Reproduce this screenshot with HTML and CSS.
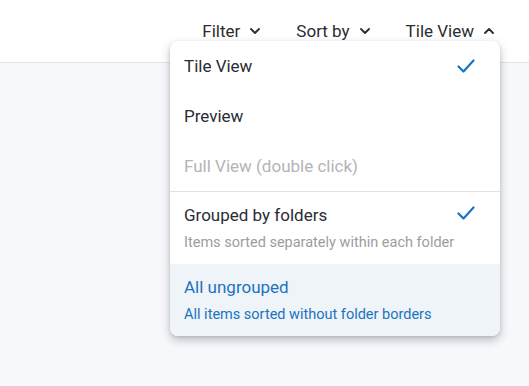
FILE: index.html
```html
<!DOCTYPE html>
<html lang="en">

<head>
  <meta charset="utf-8" />
  <title>View options</title>
  <meta name="viewport" content="width=device-width, initial-scale=1">
  <link rel="stylesheet" href="styles.css">
</head>

<body>
  <!-- ===== TOOLBAR ===== -->
  <header class="toolbar">
    <button class="tool">Filter
      <svg class="chev" viewBox="0 0 10 6"><path d="M1 1l4 4 4-4" /></svg>
    </button>
    <button class="tool">Sort by
      <svg class="chev" viewBox="0 0 10 6"><path d="M1 1l4 4 4-4" /></svg>
    </button>
    <button class="tool open">Tile View
      <svg class="chev" viewBox="0 0 10 6"><path d="M1 5l4-4 4 4" /></svg>
    </button>
  </header>

  <!-- ===== MENU ===== -->
  <div class="menu">
    <div class="item">Tile View
      <svg class="check" viewBox="0 0 18 14"><path d="M1.5 7.5l5 5 10-11" /></svg>
    </div>
    <div class="item">Preview</div>
    <div class="item disabled">Full View (double click)</div>
    <div class="sep"></div>
    <div class="item two">
      <div class="title">Grouped by folders</div>
      <div class="sub">Items sorted separately within each folder</div>
      <svg class="check" viewBox="0 0 18 14"><path d="M1.5 7.5l5 5 10-11" /></svg>
    </div>
    <div class="item two hover">
      <div class="title">All ungrouped</div>
      <div class="sub">All items sorted without folder borders</div>
    </div>
  </div>
</body>
</html>
```

FILE: styles.css
```css
/* ===== BASE ===== */
* {
  box-sizing: border-box;
  margin: 0;
  padding: 0
}

body {
  font-family: Roboto, "Liberation Sans", sans-serif;
  background: #f7f8fb;
  color: #2a2c33;
  height: 386px;
  overflow: hidden;
  position: relative
}

/* ===== TOOLBAR ===== */
.toolbar {
  height: 63px;
  background: #fff;
  border-bottom: 1px solid #e1e3e6;
  display: flex;
  justify-content: flex-end;
  align-items: flex-start;
  gap: 36px;
  padding: 20px 35px 0 0
}

.tool {
  font: inherit;
  font-size: 17px;
  line-height: 22px;
  color: #2a2c33;
  background: none;
  border: 0;
  display: flex;
  align-items: center;
  gap: 10px
}

.chev {
  width: 10px;
  height: 6px;
  fill: none;
  stroke: #2a2c33;
  stroke-width: 1.8;
  stroke-linecap: round;
  stroke-linejoin: round
}

/* ===== MENU ===== */
.menu {
  position: absolute;
  top: 41px;
  left: 170px;
  width: 330px;
  background: #fff;
  border-radius: 8px;
  overflow: hidden;
  box-shadow: 0 4px 10px rgba(30, 35, 45, .28), 0 1px 3px rgba(30, 35, 45, .12)
}

.item {
  position: relative;
  height: 50px;
  display: flex;
  align-items: center;
  padding: 0 14px;
  font-size: 17px
}

.item.disabled {
  color: #b3b4b7
}

.sep {
  height: 1px;
  background: #dfe1e4
}

.item.two {
  height: auto;
  display: block;
  padding: 12px 14px 12px
}

.title {
  line-height: 22px
}

.sub {
  font-size: 14.5px;
  line-height: 18px;
  margin-top: 8px;
  color: #9c9da1
}

.item.hover {
  background: #eff4f8;
  color: #1b73c1
}

.item.hover .sub {
  color: #1b73c1
}

.check {
  position: absolute;
  right: 25px;
  top: 18px;
  width: 18px;
  height: 14px;
  fill: none;
  stroke: #1b73c1;
  stroke-width: 2.2;
  stroke-linecap: round;
  stroke-linejoin: round
}

.item.two .check {
  top: 14px
}
```
